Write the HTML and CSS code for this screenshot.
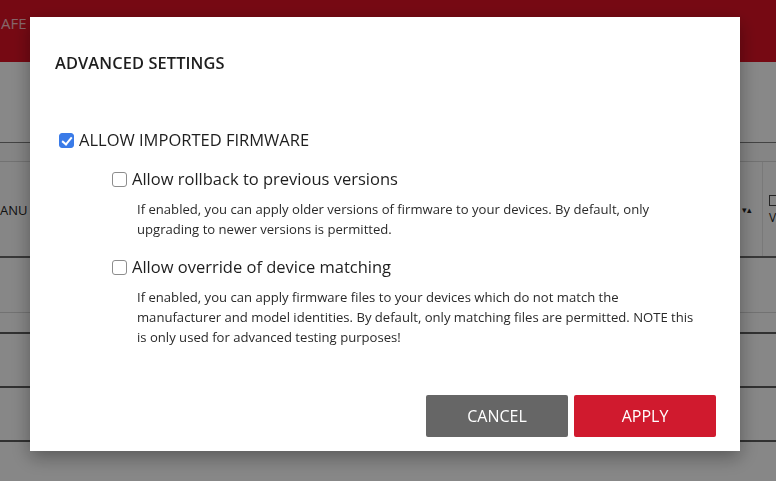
FILE: index.html
```html
<!DOCTYPE html>
<html lang="en">
<head>
<meta charset="utf-8">
<title>Advanced Settings</title>
<link rel="stylesheet" href="styles.css">
</head>
<body>
<div class="page">
  <header class="topbar"><span class="brand">AFE</span></header>
  <div class="toolbar"></div>
  <div class="table">
    <div class="table-band"></div>
    <div class="table-head">
      <div class="th th-first">ANU</div>
      <div class="th th-fill"></div>
      <div class="th th-sort"><span class="sort">▾▴</span></div>
      <div class="th th-last"><span class="mini-box"></span><span class="th-v">V</span></div>
    </div>
    <div class="row row-a"></div>
    <div class="row row-b"></div>
    <div class="row row-c"></div>
    <div class="row row-d"></div>
    <div class="row row-e"></div>
  </div>
</div>

<div class="overlay"></div>

<div class="modal" role="dialog" aria-labelledby="dlg-title">
  <h2 class="modal-title" id="dlg-title">ADVANCED SETTINGS</h2>
  <div class="modal-body">
    <label class="opt opt-main">
      <input type="checkbox" class="cb" checked>
      <span>ALLOW IMPORTED FIRMWARE</span>
    </label>
    <div class="sub">
      <label class="opt opt-sub">
        <input type="checkbox" class="cb">
        <span>Allow rollback to previous versions</span>
      </label>
      <p class="desc">If enabled, you can apply older versions of firmware to your devices. By default, only upgrading to newer versions is permitted.</p>
      <label class="opt opt-sub opt-second">
        <input type="checkbox" class="cb">
        <span>Allow override of device matching</span>
      </label>
      <p class="desc">If enabled, you can apply firmware files to your devices which do not match the manufacturer and model identities. By default, only matching files are permitted. NOTE this is only used for advanced testing purposes!</p>
    </div>
  </div>
  <div class="modal-footer">
    <button class="btn btn-cancel">CANCEL</button>
    <button class="btn btn-apply">APPLY</button>
  </div>
</div>
</body>
</html>
```

FILE: styles.css
```css
* { box-sizing: border-box; }

html, body {
  margin: 0;
  padding: 0;
  width: 776px;
  height: 481px;
  overflow: hidden;
}

body {
  font-family: "Open Sans", "Noto Sans", sans-serif;
  color: #222;
  background: #f8f8f8;
}

/* ---------- underlying page ---------- */
.page {
  width: 776px;
  height: 481px;
  display: flex;
  flex-direction: column;
}

.topbar {
  height: 62px;
  background: #d81224;
  display: flex;
  align-items: flex-start;
  padding-top: 13px;
}

.brand {
  color: rgba(255, 255, 255, 0.72);
  font-size: 15px;
  line-height: 20px;
  margin-left: 1px;
}

.toolbar {
  height: 81px;
  background: #f8f8f8;
  border-bottom: 1px solid #7a7a7a;
}

.table { flex: 1; display: flex; flex-direction: column; }

.table-band {
  height: 19px;
  background: #f2f2f2;
  border-bottom: 1px solid #cfcfcf;
}

.table-head {
  height: 96px;
  display: flex;
  border-bottom: 2px solid #666;
  background: #f4f4f4;
}

.th {
  font-size: 13px;
  color: #222;
  display: flex;
  align-items: center;
}

.th-first { width: 40px; padding-top: 1px; }
.th-fill { flex: 1; }
.th-sort { width: 28px; justify-content: flex-end; padding-right: 10px; }
.sort { font-size: 9px; letter-spacing: 0; }
.th-last {
  width: 14px;
  border-left: 1px solid #dcdcdc;
  flex-direction: column;
  align-items: flex-start;
  justify-content: center;
  padding-left: 6px;
  gap: 6px;
}
.mini-box { width: 10px; height: 11px; border: 1px solid #444; }
.th-v { font-size: 12px; line-height: 12px; }

.row { border-bottom: 2px solid #5a5a5a; background: #f6f6f6; }
.row-a { height: 55px; border-bottom: 1px solid #d0d0d0; }
.row-b { height: 21px; }
.row-c { height: 54px; }
.row-d { height: 54px; }
.row-e { flex: 1; border-bottom: none; }

/* ---------- overlay ---------- */
.overlay {
  position: fixed;
  inset: 0;
  background: rgba(0, 0, 0, 0.45);
}

/* ---------- modal ---------- */
.modal {
  position: fixed;
  left: 30px;
  top: 17px;
  width: 710px;
  height: 434px;
  background: #fff;
  box-shadow: 0 6px 18px rgba(0, 0, 0, 0.35);
  display: flex;
  flex-direction: column;
}

.modal-title {
  margin: 35px 0 0 25px;
  font-size: 16.4px;
  line-height: 22px;
  font-weight: 600;
  color: #1e1e1e;
  letter-spacing: 0.1px;
}

.modal-body {
  padding: 0 40px 0 25px;
  margin-top: 55px;
}

.opt {
  display: flex;
  align-items: center;
  line-height: 22px;
  color: #1e1e1e;
}

.opt-main { font-size: 16.5px; }
.opt-sub { font-size: 16.5px; }

.cb {
  appearance: none;
  -webkit-appearance: none;
  width: 15px;
  height: 15px;
  margin: 0 5px 0 4px;
  border: 1px solid #8d8d8d;
  border-radius: 3px;
  background: #fff;
  position: relative;
  flex: none;
}

.cb:checked {
  background: #3a7be8;
  border-color: #3a7be8;
}

.cb:checked::after {
  content: "";
  position: absolute;
  left: 4px;
  top: 1px;
  width: 4px;
  height: 8px;
  border: solid #fff;
  border-width: 0 2.2px 2.2px 0;
  transform: rotate(40deg);
}

.sub {
  margin-left: 53px;
  margin-top: 17px;
}

.opt-second { margin-top: 17px; }

.desc {
  margin: 9px 0 0 29px;
  font-size: 13.1px;
  line-height: 20px;
  color: #2a2a2a;
}

.modal-footer {
  margin-top: auto;
  display: flex;
  justify-content: flex-end;
  gap: 6px;
  padding: 0 24px 14px 0;
}

.btn {
  width: 142px;
  height: 42px;
  border: none;
  border-radius: 2px;
  font-family: "Open Sans", "Noto Sans", sans-serif;
  font-size: 16px;
  color: #fff;
  padding: 0;
}

.btn-cancel { background: #666666; }
.btn-apply { background: #d01a2e; }
```
